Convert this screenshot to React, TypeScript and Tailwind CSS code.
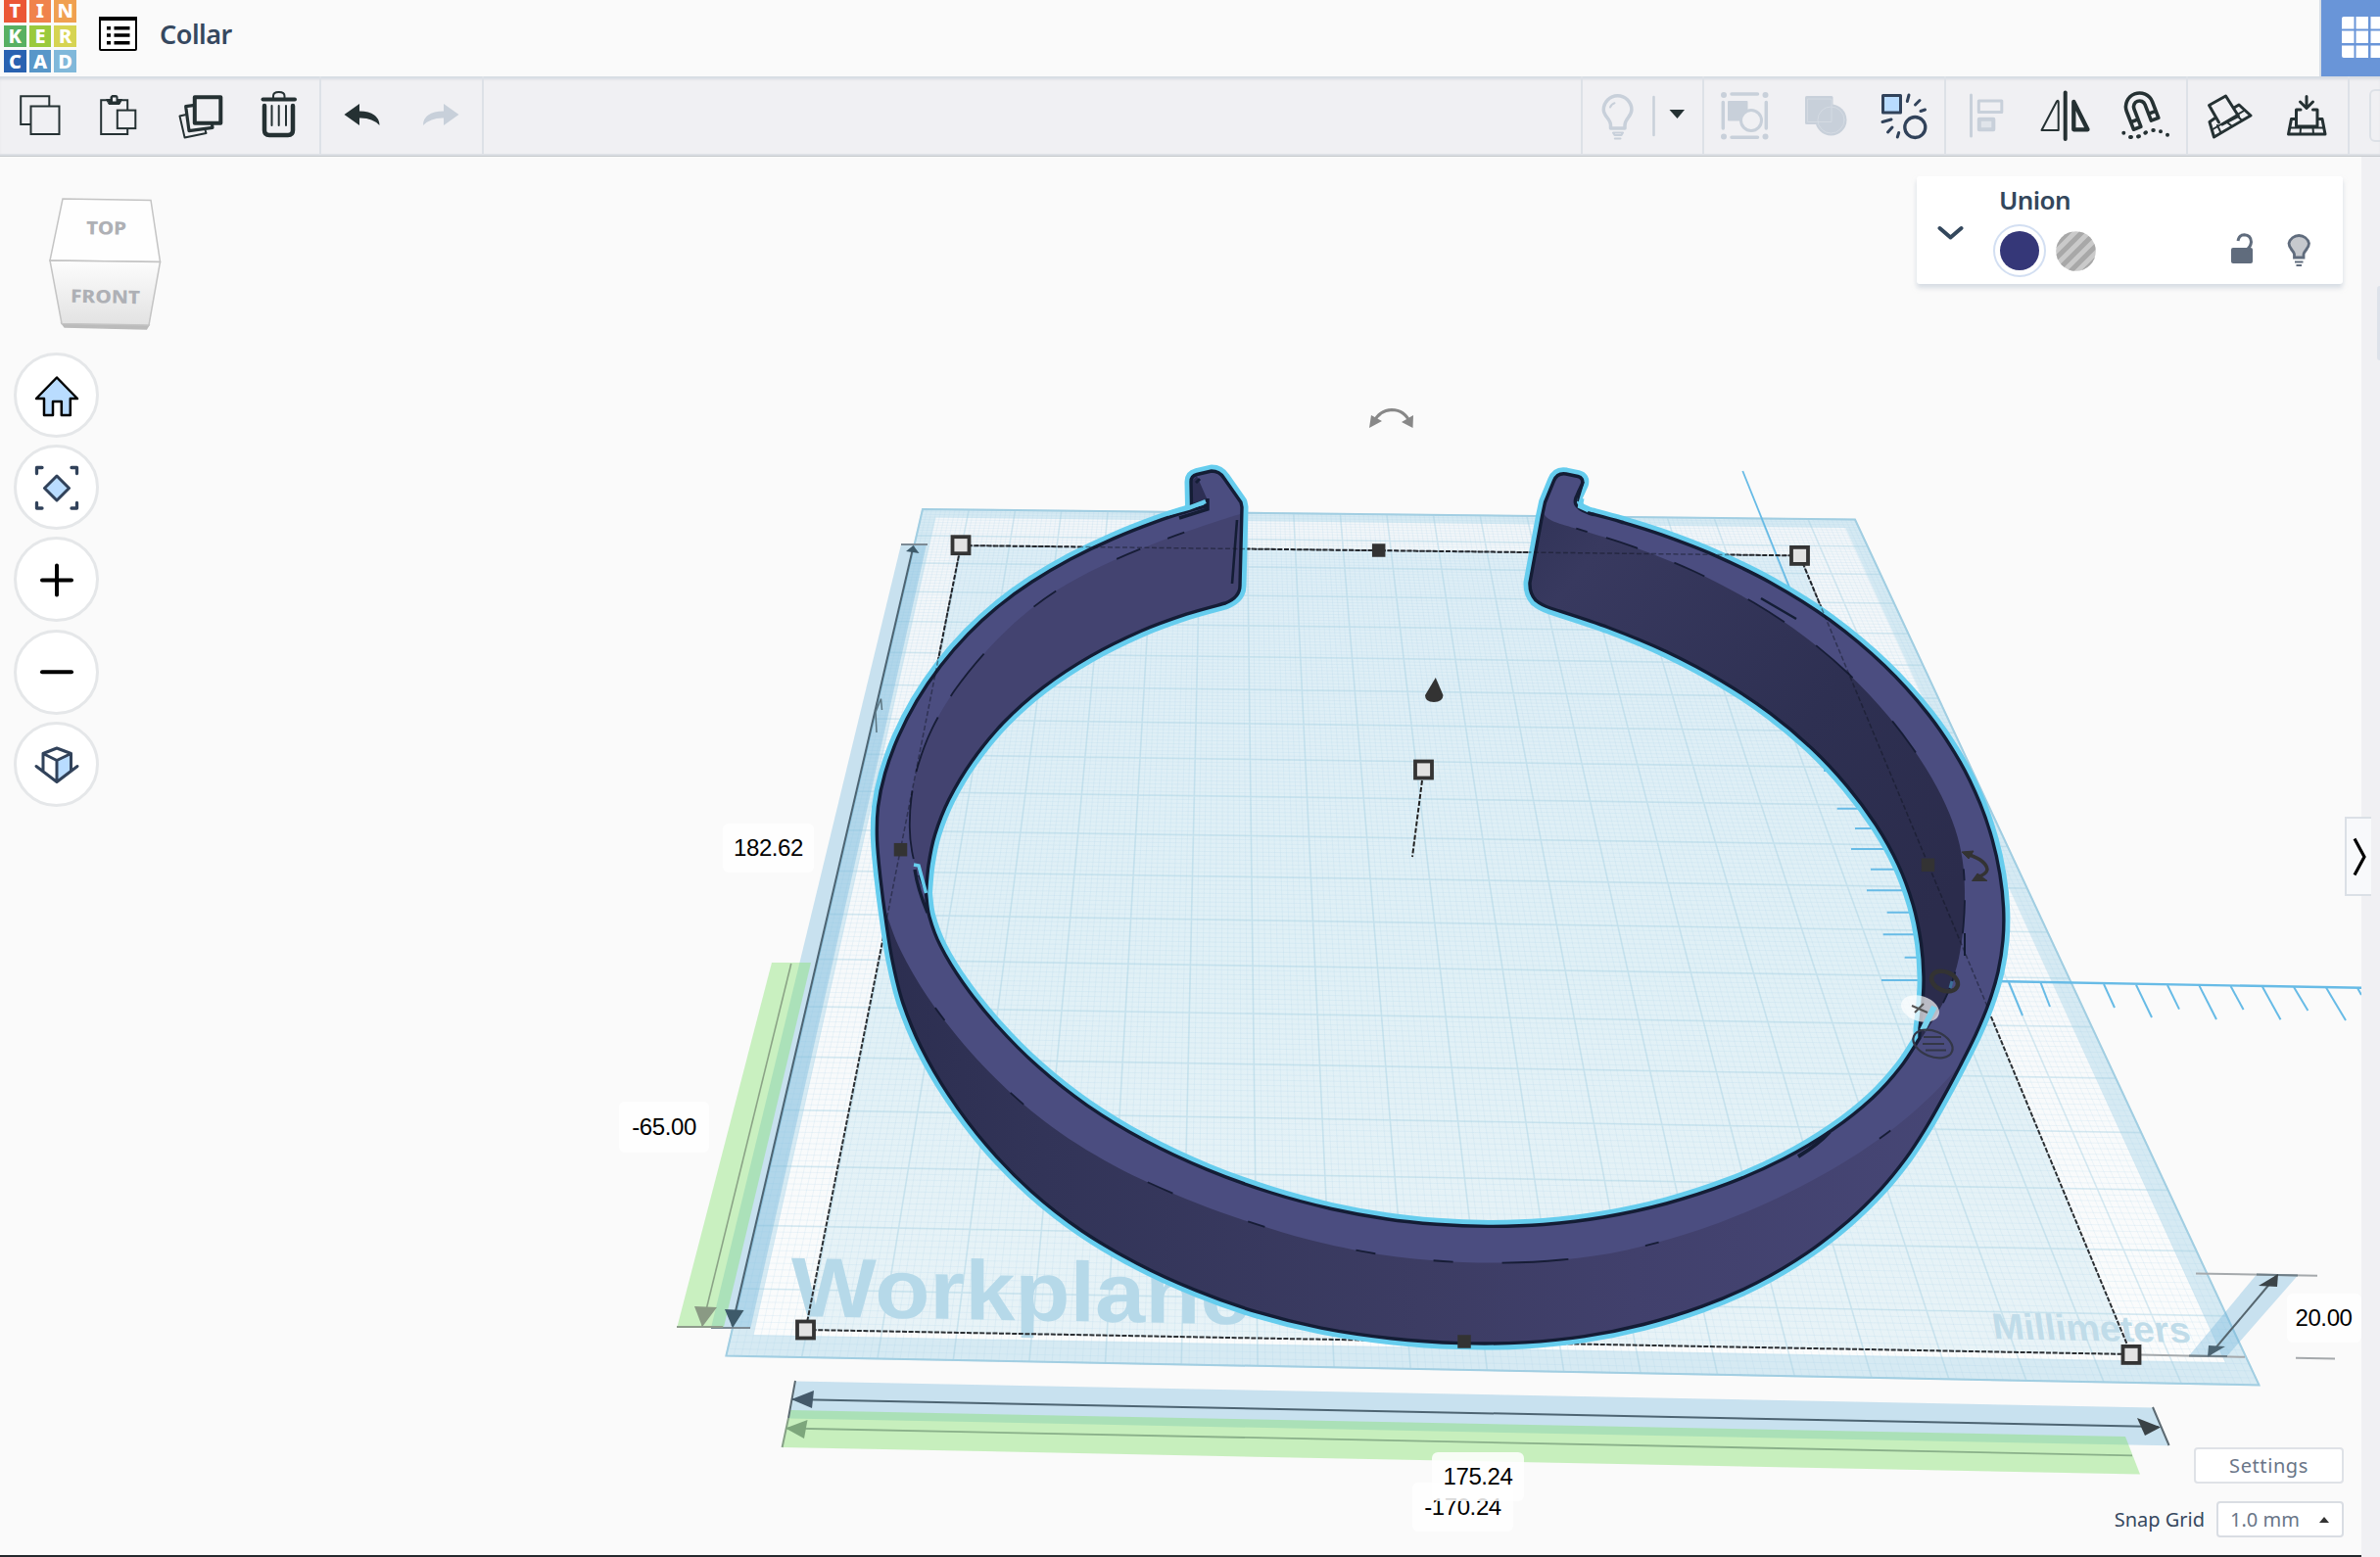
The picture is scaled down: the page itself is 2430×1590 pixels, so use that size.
import React from "react";

type P = [number, number];

/* Smooth path through points (Catmull-Rom converted to cubic Béziers). */
function smooth(pts: P[], move: "M" | "L" = "M"): string {
  let d = `${move}${pts[0][0].toFixed(1)} ${pts[0][1].toFixed(1)}`;
  for (let i = 0; i < pts.length - 1; i++) {
    const a = pts[i - 1] || pts[i];
    const b = pts[i];
    const c = pts[i + 1];
    const e = pts[i + 2] || c;
    d += `C${(b[0] + (c[0] - a[0]) / 6).toFixed(1)} ${(b[1] + (c[1] - a[1]) / 6).toFixed(1)} ${(c[0] - (e[0] - b[0]) / 6).toFixed(1)} ${(c[1] - (e[1] - b[1]) / 6).toFixed(1)} ${c[0].toFixed(1)} ${c[1].toFixed(1)}`;
  }
  return d;
}

/* Evens out small wobbles in a polyline without shrinking it (Taubin filter). */
function fair(pts: P[]): P[] {
  let cur = pts;
  for (const k of [0.5, -0.52, 0.5, -0.52, 0.5, -0.52]) {
    const src = cur;
    cur = src.map((p, i): P => {
      if (i === 0 || i === src.length - 1) return p;
      const mx = (src[i - 1][0] + src[i + 1][0]) / 2;
      const my = (src[i - 1][1] + src[i + 1][1]) / 2;
      return [p[0] + k * (mx - p[0]), p[1] + k * (my - p[1])];
    });
  }
  return cur;
}

/* Projects unit-square coordinates onto the workplane quad. */
function projector(q: P[]) {
  const [[x0, y0], [x1, y1], [x2, y2], [x3, y3]] = q;
  const dx1 = x1 - x2, dx2 = x3 - x2, sx = x0 - x1 + x2 - x3;
  const dy1 = y1 - y2, dy2 = y3 - y2, sy = y0 - y1 + y2 - y3;
  const det = dx1 * dy2 - dx2 * dy1;
  const g = (sx * dy2 - dx2 * sy) / det;
  const h = (dx1 * sy - sx * dy1) / det;
  const a = x1 - x0 + g * x1, b = x3 - x0 + h * x3;
  const c = y1 - y0 + g * y1, e = y3 - y0 + h * y3;
  return (u: number, v: number): P => {
    const w = g * u + h * v + 1;
    return [(a * u + b * v + x0) / w, (c * u + e * v + y0) / w];
  };
}

const plane: P[] = [[942, 520], [1894, 530.6], [2306.5, 1414.4], [741.4, 1384.5]];
const proj = projector(plane);

function gridPath(step: number): string {
  let d = "";
  for (let i = 0; i <= 200; i += step) {
    const t = i / 200;
    const [a, b, c, e] = [proj(t, 0), proj(t, 1), proj(0, t), proj(1, t)];
    d += `M${a[0].toFixed(1)} ${a[1].toFixed(1)}L${b[0].toFixed(1)} ${b[1].toFixed(1)}`;
    d += `M${c[0].toFixed(1)} ${c[1].toFixed(1)}L${e[0].toFixed(1)} ${e[1].toFixed(1)}`;
  }
  return d;
}
const minorGrid = gridPath(1);
const majorGrid = gridPath(10);

const outer: P[] = fair([
  [1231, 517], [1215, 522], [1181.6, 532], [1135.7, 550], [1092, 572], [1054, 594], [1020, 619], [989, 647], [959.7, 681],
  [936.7, 715], [917, 753], [903.6, 790], [896.5, 826], [895.5, 856], [899, 895], [905.5, 942], [911.8, 984], [922, 1024],
  [940, 1068], [969, 1119], [1007.8, 1170], [1053.7, 1217], [1104.7, 1257], [1160.8, 1290], [1222, 1317.500], [1283.3, 1339.500],
  [1347, 1356], [1420, 1366.5], [1493, 1371.5], [1557.7, 1370.5], [1616.8, 1364.5], [1677, 1352.5], [1738, 1334],
  [1794, 1310], [1844, 1280], [1887, 1247], [1921, 1213], [1945, 1184], [1966, 1152], [1984.7, 1119], [2001, 1088],
  [2016.7, 1057.500], [2030.500, 1025], [2040, 992], [2044.800, 960], [2045.5, 928], [2041.7, 892], [2033.6, 857],
  [2021, 821], [2001, 778], [1970, 731], [1924, 679], [1867.7, 632.500], [1808.4, 595.500], [1749, 566.5], [1695.7, 546],
  [1654.2, 533], [1622, 524],
]);
const holeRight: P[] = fair([
  [1583, 621], [1642, 640], [1701.7, 665.5], [1757, 695.5], [1808.4, 729], [1850, 764.5], [1885.5, 803.3], [1915, 842],
  [1938, 882.500], [1953.2, 923], [1961.5, 964], [1963.7, 1000], [1963, 1022], [1960, 1050],
]);
const holeBottom: P[] = fair([
  [1960, 1060], [1942, 1089], [1912.4, 1121], [1869.7, 1154.5], [1822, 1183], [1764, 1208.500], [1702, 1229], [1636.5, 1243],
  [1575, 1250.5], [1520, 1252], [1465.7, 1249.800], [1416, 1244.500], [1359.8, 1234.6], [1298.6, 1217.8], [1232.2, 1194.6],
  [1168, 1164], [1109.8, 1128.500], [1060, 1089.500], [1018, 1047], [983, 1003], [960, 966], [948, 935], [945.5, 912],
]);
const holeLeft: P[] = fair([
  [945.5, 912], [948, 883], [955, 852], [968, 818], [992.9, 776.7], [1024.500, 738], [1064.3, 702.5], [1112, 670.7],
  [1166.3, 643.3], [1213, 627], [1251, 616],
]);
const hookRight =
  "C1606 518 1607 512 1610 506L1615.500 494Q1617 488 1611 486.500L1599 484Q1590 482.500 1586.500 491L1577.500 513L1574.500 527L1562 595Q1561.500 606 1568 613Q1574 618 1583 621";
const hookLeft = "Q1266 610 1266 598L1268 518L1267 513L1249.500 488Q1245 481 1237 481L1222 484.500Q1216 486 1216 492L1216.500 516L1231 512Z";

const silhouette = smooth(outer) + hookRight + smooth(holeRight, "L") + smooth(holeBottom, "L") + smooth(holeLeft, "L") + hookLeft;

const rimLeft: P[] = fair([
  [1266, 525], [1227.5, 537], [1176.5, 556], [1120, 580], [1079.6, 602.500], [1043.9, 630], [1008, 664], [974, 705], [952, 744],
  [938, 780], [930.6, 815], [929, 845], [931.6, 870], [936, 889], [945.5, 912],
]);
const rimRight: P[] = fair([
  [1575, 522], [1580, 528], [1590, 535], [1614, 541.5], [1666, 557], [1731, 583.500], [1792, 616], [1844, 652], [1887, 688],
  [1927, 730], [1960, 774], [1982, 814], [1996.2, 847], [2003.3, 877], [2005.7, 908], [2004.3, 946], [2000, 979],
  [1991, 1009], [1977.500, 1036], [1962, 1060],
]);
const rimFront: P[] = fair([
  [904, 930], [918, 968], [950, 1024], [1007.8, 1093], [1067, 1145], [1135, 1188.500], [1217, 1227], [1313.9, 1259.500],
  [1390, 1277.500], [1459, 1286.500], [1531.4, 1289], [1594, 1286], [1660, 1276.500], [1732, 1257], [1807.3, 1227],
  [1880, 1189], [1935, 1151], [1974, 1116], [2001, 1088],
]);
const wallLeft = smooth(rimLeft) + smooth(holeLeft, "L") + "Q1266 610 1266 598Z";
const wallRight =
  smooth(rimRight) + smooth([...holeRight].reverse(), "L") + "Q1574 618 1568 613Q1561.500 606 1562 595Z";
const wallFront = smooth(rimFront) + smooth(outer.slice(15, 41).reverse(), "L") + "Z";

const rulerDown: [number, number, number, number][] = [
  [2051, 1003, 2065, 1037], [2083.6, 1003.7, 2093, 1028], [2148, 1005, 2159, 1029], [2181, 1005.7, 2197, 1039],
  [2213, 1006, 2225, 1030.6], [2245.5, 1006.6, 2263, 1041], [2277.5, 1007, 2290.6, 1031], [2310, 1007.8, 2328.5, 1041.3],
  [2342, 1008, 2356.4, 1032], [2375, 1008.6, 2395, 1042], [2407, 1009, 2411, 1016],
];
const rulerSide: P[] = [
  [1862, 787], [1875.7, 825.7], [1894, 846], [1890, 867], [1910, 887.7], [1906, 909.3], [1926.7, 931.7], [1922.7, 954.3], [1944.7, 977.7],
  [1921, 1001],
];

function Handle({ x, y }: { x: number; y: number }) {
  return <rect x={x - 8.5} y={y - 8.5} width="17" height="17" fill="#e2e2e2" stroke="#343434" strokeWidth="3.8" />;
}
function Knob({ x, y }: { x: number; y: number }) {
  return <rect x={x - 6.75} y={y - 6.75} width="13.5" height="13.5" fill="#333" />;
}

function Scene() {
  return (
    <svg className="block h-full w-full" viewBox="0 159 2411 1429" preserveAspectRatio="xMinYMin slice" fill="none">
      <defs>
        <linearGradient id="wr" gradientUnits="userSpaceOnUse" x1="1561" y1="560" x2="2000" y2="900">
          <stop offset="0" stopColor="#33355a" />
          <stop offset="0.1" stopColor="#38395f" />
          <stop offset="0.6" stopColor="#2e3052" />
          <stop offset="1" stopColor="#2b2c4c" />
        </linearGradient>
        <linearGradient id="wf" gradientUnits="userSpaceOnUse" x1="900" y1="0" x2="2000" y2="0">
          <stop offset="0" stopColor="#2c2e50" />
          <stop offset="0.15" stopColor="#323458" />
          <stop offset="0.5" stopColor="#3c3c63" />
          <stop offset="0.7" stopColor="#41406c" />
          <stop offset="1" stopColor="#464675" />
        </linearGradient>
        <linearGradient id="pl" gradientUnits="userSpaceOnUse" x1="0" y1="530" x2="0" y2="1390">
          <stop offset="0" stopColor="#f2f6f9" />
          <stop offset="1" stopColor="#fbfcfc" />
        </linearGradient>
        <linearGradient id="bx" gradientUnits="userSpaceOnUse" x1="0" y1="560" x2="0" y2="1380">
          <stop offset="0" stopColor="#deeef6" />
          <stop offset="0.5" stopColor="#e0f0f6" />
          <stop offset="1" stopColor="#e8f3f7" />
        </linearGradient>
      </defs>

      {/* workplane */}
      <path d="M942 520L1894 530.6L2306.5 1414.4L741.4 1384.5Z" fill="#d6eaf3" stroke="#a3cfe3" strokeWidth="2" />
      <path d="M955.6 528.5L1884.3 539L2271.7 1391L769.5 1363Z" fill="url(#pl)" />
      <path d="M981 557L1837.5 567.4L2176 1383L822.5 1358Z" fill="url(#bx)" />
      <path d={minorGrid} stroke="#a9d3e6" strokeWidth="0.8" opacity="0.22" />
      <path d={majorGrid} stroke="#9fcde1" strokeWidth="1.7" opacity="0.32" />
      <g fontFamily='"Liberation Sans", Arial, sans-serif' fontWeight="700">
        <text transform="matrix(1.07 .019 0 1 808 1344)" fontSize="86" fill="#b6d9e9">Workplane</text>
        <text transform="matrix(1.045 .021 .15 1 2036 1367)" fontSize="37" fill="#c0dce9">Millimeters</text>
      </g>

      {/* left dimension bands */}
      <path d="M920 556L946 556L766.4 1356L726 1356Z" fill="#6fb5da" fillOpacity="0.36" />
      <path d="M788 983H828L739 1355H691.4Z" fill="#80e06a" fillOpacity="0.4" />
      <path d="M920 556H947M726 1356H766" stroke="#7c8a94" strokeWidth="2" />
      <path d="M691 1355H738" stroke="#8f9c8c" strokeWidth="2" />
      <path d="M932.5 558L747.5 1354" stroke="#4d6472" strokeWidth="2" />
      <path d="M807.8 984L717 1354" stroke="#8ba386" strokeWidth="1.6" />
      <path d="M932.5 557L938.5 565L925 563ZM740 1337L759.5 1338L748 1356Z" fill="#3e5a6a" />
      <path d="M709 1334L732 1335L717 1355Z" fill="#8a9a84" />
      <path d="M899.5 713.5L900.5 725M899.5 713.5L894 727L895 748" stroke="#5b7480" strokeWidth="1.5" />

      {/* bottom dimension bands */}
      <path d="M811.8 1410.5L2198 1437.4L2214.6 1476.3L804.7 1448.4Z" fill="#6fb5da" fillOpacity="0.36" />
      <path d="M806.7 1440L2170 1467L2185 1505.6L798.6 1478Z" fill="#80e06a" fillOpacity="0.42" />
      <path d="M812 1410L805 1448M2198 1437L2214.6 1476" stroke="#5c6a72" strokeWidth="2" />
      <path d="M805 1448L798.6 1478" stroke="#86a086" strokeWidth="2" />
      <path d="M809 1429L2204 1457" stroke="#4d6472" strokeWidth="2" />
      <path d="M803 1458.5L2177 1486.3" stroke="#8ab08a" strokeWidth="1.8" />
      <path d="M808 1429L831 1420L829 1438Z" fill="#44596a" />
      <path d="M2206 1457.5L2182 1448L2190 1466Z" fill="#3a4246" />
      <path d="M802 1458.5L824.5 1450L821 1469Z" fill="#7da67c" />

      {/* height dimension */}
      <path d="M2304 1301.4L2346 1302.4L2273.7 1385L2235 1384.5Z" fill="#6fb5da" fillOpacity="0.36" />
      <path d="M2242 1300.4L2366 1302.8M2186 1383.4L2292 1385.8M2344 1386.8L2384 1387.5" stroke="#a5a9ac" strokeWidth="2" />
      <path d="M2304 1301.5L2346 1302.5M2235 1384.5L2274 1385" stroke="#6f7f88" strokeWidth="2" />
      <path d="M2325 1302L2255.3 1384.7" stroke="#55656e" strokeWidth="2" />
      <path d="M2326 1301L2306 1313L2325 1314Z" fill="#3c4448" />
      <path d="M2254 1385.5L2255 1374L2272 1375Z" fill="#4c6472" />

      {/* ruler */}
      <g stroke="#67bbe6" strokeWidth="2">
        <path d="M1779.3 481L1832 612" strokeWidth="1.8" />
        <path d="M2035 1002L2411 1008.8" strokeWidth="2.4" />
        {rulerDown.map(([a, b, c, d]) => <path key={a} d={`M${a} ${b}L${c} ${d}`} />)}
        {rulerSide.map(([x, y]) => <path key={y} d={`M${x} ${y}h42`} />)}
      </g>

      {/* selection box on the plane */}
      <path d="M981 557L1837.5 567.4L2176 1383L822.5 1358Z" stroke="#2b2f33" strokeWidth="2" strokeDasharray="5 1.6" />

      {/* collar */}
      <path d={silhouette} stroke="#66cdee" strokeWidth="13" strokeLinejoin="round" />
      <path d={silhouette} fill="#4b4d80" />
      <path d={wallLeft} fill="#434370" />
      <path d={wallRight} fill="url(#wr)" />
      <path d={wallFront} fill="url(#wf)" />
      <path d="M1216.5 515L1216 492L1222 486L1226 495L1233 511Z" fill="#2d2f54" />
      <path d={silhouette} stroke="#141d35" strokeWidth="3.4" strokeLinejoin="round" />
      <path d={smooth(rimLeft)} stroke="#171d36" strokeWidth="1.8" strokeDasharray="0 60 18 30 26 70 28 70 55 25 60 20 70 18 90 40" />
      <path d={smooth(rimRight)} stroke="#171d36" strokeWidth="1.8" strokeDasharray="0 40 12 20 34 40 34 50 44 40 50 60 40 90" />
      <path d={smooth(rimFront)} stroke="#171d36" strokeWidth="1.8" strokeDasharray="0 112 16 100 18 150 28 82 18 96 20 60 20 50 68 80 14 250 14 110 40 60" />
      <path d="M1798 611L1834 632M1263 531L1258 596" stroke="#141d35" strokeWidth="2.6" />
      <path d="M1836 1181Q1856 1169 1868 1156" stroke="#141d35" strokeWidth="4" />
      <path d="M1204 529L1233 520V509" stroke="#141d35" strokeWidth="3.5" />
      <path d="M1192 524.5L1214 518.5L1231 512" stroke="#66cdee" strokeWidth="4.5" />
      <path d="M1615 509L1613.5 517L1622 521" stroke="#66cdee" strokeWidth="5" />
      <path d="M1617 492L1611 512L1611 502Z" fill="#141d35" stroke="#141d35" strokeWidth="1.5" />
      <path d="M1225 489L1221 493" stroke="#141d35" strokeWidth="3" />
      <path d="M933 883L938 884L945.500 912" stroke="#66cdee" strokeWidth="3.5" />
      <path d="M934 888Q937 908 947 932" stroke="#141d35" strokeWidth="3.4" />

      {/* box edges showing through */}
      <path d="M981 557L1837.5 567.4L2030 1030M981 557L905 940" stroke="#10131f" strokeWidth="1.5" strokeDasharray="5 2.5" opacity="0.45" />
      <path d="M1452 797L1442 875" stroke="#222" strokeWidth="2" strokeDasharray="5 2" />

      {/* right-hand gizmos */}
      <path d="M2006 953V976" stroke="#141d35" strokeWidth="2" />
      <g stroke="#333" strokeWidth="3">
        <path d="M2011 873Q2028 879 2029 888Q2028 893 2020 895" strokeWidth="3.500" />
        <path d="M2003 870L2015 869L2010 877ZM2013.5 899.5L2019 892L2029 899.5Z" fill="#333" strokeWidth="1" />
        <ellipse cx="1985.5" cy="1002" rx="14" ry="9.5" transform="rotate(22 1985.5 1002)" strokeWidth="4.5" />
      </g>
      <path d="M1993 1002L1991 1009" stroke="#3c6f98" strokeWidth="3" />
      <ellipse cx="1960.5" cy="1030" rx="20" ry="13" transform="rotate(18 1960.5 1030)" fill="#fff" fillOpacity="0.68" />
      <path d="M1975 1028L1963 1052" stroke="#7ad4ee" strokeWidth="6" />
      <path d="M1952 1027L1968 1034M1964 1025L1955 1034" stroke="#555" strokeWidth="2" />
      <ellipse cx="1973.5" cy="1066" rx="21" ry="13" transform="rotate(22 1973.5 1066)" stroke="#333747" strokeWidth="2.2" />
      <path d="M1964 1059H1982M1963 1066H1985M1966 1072.5H1987" stroke="#333747" strokeWidth="2.2" />

      {/* rotate arrow */}
      <path d="M1403 431Q1408 419 1421 418.5Q1434 418.5 1440 432" stroke="#888" strokeWidth="3.2" />
      <path d="M1398 437L1400 424L1411 430ZM1442.5 437L1431 431L1443 424Z" fill="#888" />

      <path d="M1465.8 692L1473.5 710Q1473 717 1464 717Q1455 717 1455 710Z" fill="#333" />
      <Handle x={981} y={556.7} />
      <Handle x={1837.5} y={567.4} />
      <Handle x={1453.5} y={786} />
      <Handle x={822.5} y={1358} />
      <Handle x={2176} y={1383.4} />
      <Knob x={1407.7} y={562} />
      <Knob x={919.5} y={867.7} />
      <Knob x={1968.5} y={883.3} />
      <Knob x={1495} y={1370} />
    </svg>
  );
}

/* One toolbar slot; drawings use the toolbar's own coordinates. */
function Slot({ x, w, children, color = "#253133" }: { x: number; w: number; children?: React.ReactNode; color?: string }) {
  return (
    <svg className="block shrink-0" width={w} height={80} viewBox={`${x} 78 ${w} 80`} fill="none" stroke={color} strokeWidth="2" strokeLinecap="round" strokeLinejoin="round">
      {children}
    </svg>
  );
}
const Rule = () => <div className="h-full w-[2px] shrink-0 bg-[#dde1e7]" />;

function Toolbar() {
  return (
    <div className="relative z-10 flex h-[81px] w-full shrink-0 border-b-2 border-[#dde0e5] bg-[#f0f0f3] shadow-[inset_0_4px_3px_-1px_#d6dbe2,0_1px_0_#c3c7cb]">
      <Slot x={0} w={82}>
        <g strokeLinecap="butt" strokeLinejoin="miter">
          <path d="M31 127H21.2V98.3H50.3V108" />
          <rect x="31.5" y="108.5" width="29" height="28.5" />
        </g>
      </Slot>
      <Slot x={82} w={82}>
        <g strokeLinecap="butt" strokeLinejoin="miter">
          <path d="M130.2 112V102.3H103.2V137H130.2V132" />
          <rect x="119.8" y="112.6" width="18.5" height="18.5" />
        </g>
        <path d="M109 101.5H113V99Q113.5 97.5 115 97.5H118.5Q120 97.5 120 99V101.5H124.5L122 106.5H111.5Z" fill="#253133" strokeWidth="1" />
        <rect x="115" y="99.5" width="3.5" height="4" fill="#f0f0f3" stroke="none" />
      </Slot>
      <Slot x={164} w={82}>
        <rect x="198.8" y="99.3" width="26.5" height="26.5" strokeWidth="4" />
        <path d="M197 107.7L189.7 108.7L193 133.6L217 130.3L216.5 127.5" strokeWidth="3.2" />
        <path d="M189 117.3L183.5 118.5L188.6 140.6L210.5 136L209.7 133.5" strokeWidth="2" />
      </Slot>
      <Slot x={246} w={80}>
        <path d="M268.5 101.5H301" strokeWidth="4" />
        <path d="M279 100V98Q279 94 284.7 94Q290.5 94 290.5 98V100" />
        <path d="M270 108V133Q270 138 275 138H294Q299 138 299 133V108" strokeWidth="4.5" />
        <path d="M277.5 108V128M284.7 108V128M292 108V128" />
      </Slot>
      <Rule />
      <Slot x={328} w={82}>
        <path d="M351.5 117L367 106V113.5Q387 114 387.5 128Q380 120 367 120.5V128Z" fill="#253133" stroke="none" />
      </Slot>
      <Slot x={410} w={82}>
        <path d="M468.5 117L453 106V113.5Q432 114 432 128Q440 120 453 120.5V128Z" fill="#c8d0da" stroke="none" />
      </Slot>
      <Rule />
      <div className="flex-1" />
      <Rule />
      <Slot x={1616} w={122} color="#c8d0da">
        <path d="M1644.5 131V128C1644.5 121 1637.3 119 1637.3 112A14.3 14.3 0 0 1 1665.9 112C1665.9 119 1659 121 1659 128V131Z" strokeWidth="3.5" />
        <path d="M1644 109.5Q1645.5 106 1648.5 105.2" />
        <path d="M1647 135.5H1657L1655.5 138H1648.5ZM1648.8 141.5H1654.5" />
        <path d="M1688.5 99V138" strokeWidth="2.5" />
        <path d="M1704.5 112H1720L1712.5 121Z" fill="#253133" stroke="none" />
      </Slot>
      <Rule />
      <Slot x={1740} w={82} color="#c8d0da">
        <path d="M1768 96H1794.5M1768 140.2H1794.5M1759.3 104.5V131M1803.3 104.5V131" strokeWidth="3.5" />
        <g fill="#c8d0da" stroke="none">
          <circle cx="1760" cy="97" r="3" /><circle cx="1802.5" cy="97" r="3" />
          <circle cx="1760" cy="139.5" r="3" /><circle cx="1802.5" cy="139.5" r="3" />
          <rect x="1764" y="103" width="20.5" height="20.5" rx="1" />
        </g>
        <circle cx="1788" cy="123" r="10.5" fill="#f0f0f3" strokeWidth="3" />
      </Slot>
      <Slot x={1822} w={82} color="#d5dbe3">
        <rect x="1843" y="98" width="28.5" height="29" rx="1.5" fill="#c8d0da" stroke="none" />
        <circle cx="1869.5" cy="122.5" r="16" fill="#c8d0da" stroke="none" />
        <rect x="1846" y="101" width="24" height="23.5" strokeWidth="0.9" />
        <circle cx="1869.5" cy="122.5" r="13.5" strokeWidth="0.9" />
      </Slot>
      <Slot x={1904} w={81} color="#31425a">
        <rect x="1922.5" y="97.5" width="18" height="17.5" fill="#b9dcff" strokeWidth="3" />
        <circle cx="1955.3" cy="130" r="10.5" strokeWidth="3.3" />
        <path d="M1949 97L1947.3 103.5M1960 102.5L1955.5 107M1965.5 112L1961 113.5M1922 124.5L1931 122M1932 130L1927.5 135M1938.7 135.5L1937.3 140" strokeWidth="3" />
      </Slot>
      <Rule />
      <Slot x={1987} w={82} color="#c8d0da">
        <path d="M2012.5 97V139" strokeWidth="3" />
        <rect x="2020.3" y="103" width="23.5" height="11.5" strokeWidth="3" />
        <rect x="2020.8" y="121.8" width="14.5" height="10.5" fill="#e0e4ea" strokeWidth="4" />
      </Slot>
      <Slot x={2069} w={82}>
        <path d="M2108.7 94.5V142" strokeWidth="4" />
        <path d="M2084.5 133L2100 103.5Q2101.7 102 2101.7 104V133Z" />
        <path d="M2117.3 104V132.3H2131.5Z" strokeWidth="4.3" />
      </Slot>
      <Slot x={2151} w={81}>
        <g transform="translate(2184.5 109) rotate(-21)" strokeWidth="3.6" strokeLinejoin="round">
          <path d="M-14 19.500V0A14 14 0 0 1 14 0V17.500H6V0A6 6 0 0 0 -6 0V19.500ZM-14 11.500H-6M6 10H14" />
        </g>
        <path d="M2168.3 135.7h.01M2175 140l1-.1M2183 139.5l1-.3M2190.3 135.700l.7-.4M2198.3 133h.5M2206 134.2h.01M2213 137.7h.01" strokeWidth="4" />
      </Slot>
      <Rule />
      <Slot x={2234} w={82}>
        <g strokeWidth="3">
          <path d="M2265.500 125L2255.5 107.5L2272.5 98L2285.5 118.500L2269 127" />
          <path d="M2261 121L2256 124.5L2260.5 140L2298 118L2286 107L2281 110" />
          <path d="M2258.5 132.5L2292 112.5M2264 128L2267.5 135.5M2274 125L2279 129M2285 119L2289 123" strokeWidth="2" />
        </g>
      </Slot>
      <Slot x={2316} w={81}>
        <g strokeWidth="3">
          <path d="M2355 98.5V110M2348.5 104L2355 110.5L2361.5 104" />
          <path d="M2349 112H2344.5V129H2366V112H2361.5" />
          <path d="M2343 121.5H2339.5L2336.5 137H2374L2371 121.5H2367.5" />
          <path d="M2338 130.5H2373M2349 130.5L2348.5 137M2361.5 130.5L2362 137" strokeWidth="2" />
        </g>
      </Slot>
      <Rule />
      <div className="h-full w-[31px] shrink-0 overflow-hidden pt-[13px] pl-5">
        <div className="h-[54px] w-10 rounded-md border-2 border-[#dde1e7]" />
      </div>
    </div>
  );
}

const tiles: [string, string][] = [
  ["T", "bg-[#eb5736]"], ["I", "bg-[#f0834c]"], ["N", "bg-[#f0a050]"],
  ["K", "bg-[#58b062]"], ["E", "bg-[#9aca3c]"], ["R", "bg-[#d6d452]"],
  ["C", "bg-[#2962b1]"], ["A", "bg-[#5897c9]"], ["D", "bg-[#80b8da]"],
];

function Header() {
  return (
    <header className="flex h-[78px] w-full shrink-0 bg-[#fafafa] font-['Noto_Sans',sans-serif]">
      <div className="ml-1 grid h-[74px] w-[74px] shrink-0 grid-cols-3 grid-rows-3 gap-[3px]">
        {tiles.map(([c, bg]) => (
          <div key={c} className={`${bg} flex items-center justify-center text-[20px] leading-[22px] font-extrabold text-white`}>{c}</div>
        ))}
      </div>
      <svg className="mt-[17px] ml-[23px] shrink-0" width="39" height="35" viewBox="0 0 39 35">
        <rect x="1" y="1" width="37" height="33" rx="1" fill="#fff" stroke="#000" strokeWidth="2" />
        <path d="M0 0H39V4H0Z" />
        <path d="M8 10h4v3.5h-4zM8 17.3h4v3.5h-4zM8 25h4v3.5h-4zM15.5 10h16v3.5h-16zM15.5 17.3h16v3.5h-16zM15.5 25h16v3.5h-16z" />
      </svg>
      <div className="mt-[15px] ml-[23px] text-[27px] leading-10 font-semibold tracking-[-0.5px] whitespace-nowrap text-[#36485f]">Collar</div>
      <div className="flex-1" />
      <div className="w-[62px] shrink-0 overflow-hidden border-l-2 border-[#d8dee6] bg-[#6995d8] pt-[17px] pl-[21px]">
        <svg width="42" height="42" viewBox="0 0 42 42" fill="#fff">
          <path d="M2 0H12.5V12.5H0V2Q0 0 2 0ZM14.5 0H27V12.5H14.5ZM29.5 0H42V12.5H29.5ZM0 14.5H12.5V27H0ZM14.5 14.5H27V27H14.5ZM29.5 14.5H42V27H29.5ZM0 29.5H12.5V42H2Q0 42 0 40ZM14.5 29.5H27V42H14.5ZM29.5 29.5H42V42H29.5Z" />
        </svg>
      </div>
    </header>
  );
}

function RoundButton({ children }: { children: React.ReactNode }) {
  return (
    <button className="flex size-[87px] items-center justify-center rounded-full border-[3px] border-[#e5e7e9] bg-white">
      <svg width="60" height="60" viewBox="-30 -30 60 60" fill="none" strokeLinecap="round" strokeLinejoin="round">{children}</svg>
    </button>
  );
}

function ViewControls() {
  return (
    <div className="absolute top-[201px] left-[14px] flex flex-col gap-[7.2px]">
      <RoundButton>
        <path d="M0 -18.5L21 3H13.8V20H4.8V6H-4V20H-13V3H-21Z" fill="#b9dcff" stroke="#000" strokeWidth="2.5" />
      </RoundButton>
      <RoundButton>
        <path d="M0 -12L12.5 .5L0 13L-12.5 .5Z" fill="#b9dcff" stroke="#31425a" strokeWidth="3" />
        <path d="M-20.5 -14.5V-20.5H-15M15 -20.5H20.5V-14.5M20.5 15.5V21H15M-15 21H-20.5V15.5" stroke="#31425a" strokeWidth="3.3" />
      </RoundButton>
      <RoundButton><path d="M-15 .5H15M0 -14.5V15.5" stroke="#000" strokeWidth="4" /></RoundButton>
      <RoundButton><path d="M-15 .3H15" stroke="#000" strokeWidth="4" /></RoundButton>
      <RoundButton>
        <path d="M0 -4L15 -10.5V7L0 18.5Z" fill="#b9dcff" />
        <path d="M-21 2.5L0 18.5L21 2.5M-14 7V-10.5L0 -16L14.5 -10.5V7M-14 -10.5L0 -3.5L14.5 -10.5M0 -3.5V18" stroke="#31425a" strokeWidth="3" />
      </RoundButton>
    </div>
  );
}

function ViewCube() {
  return (
    <svg className="absolute top-[31px] left-[40px]" width="140" height="160" viewBox="40 190 140 160">
      <defs>
        <linearGradient id="cf" x1="0" y1="0" x2="0" y2="1">
          <stop offset="0" stopColor="#fdfdfd" />
          <stop offset="1" stopColor="#e2e2e2" />
        </linearGradient>
      </defs>
      <path d="M63 330L152 332L149.5 336L66 334Z" fill="#bbb" stroke="#bbb" strokeWidth="1.5" />
      <path d="M64 203L154 204.5L163.5 267.5L51 266Z" fill="#fefefe" stroke="#c4c4c4" strokeWidth="1.5" />
      <path d="M51 266L163.5 267.5L152 332L63 330.5Z" fill="url(#cf)" stroke="#c4c4c4" strokeWidth="1.5" />
      <g fontFamily='"Noto Sans", sans-serif' fontWeight="800" fill="#aeb0b5" textAnchor="middle">
        <text x="108.5" y="239.500" fontSize="18.5" textLength="41" lengthAdjust="spacingAndGlyphs" transform="rotate(1 109 239)">TOP</text>
        <text x="107.5" y="309.500" fontSize="18.5" textLength="71" lengthAdjust="spacingAndGlyphs" transform="rotate(1 108 309)">FRONT</text>
      </g>
    </svg>
  );
}

function Inspector() {
  return (
    <div className="absolute top-[21px] left-[1957px] flex h-[110px] w-[435px] rounded-[3px] bg-white shadow-[0_4px_5px_rgba(190,200,212,0.6)] font-['Noto_Sans',sans-serif]">
      <svg className="mt-[50px] ml-[21px] shrink-0" width="28" height="17" viewBox="0 0 28 17" fill="none">
        <path d="M2.5 3L13.5 12.5L24.5 3" stroke="#33475c" strokeWidth="4" strokeLinecap="round" strokeLinejoin="round" />
      </svg>
      <div className="ml-[29px] flex flex-1 flex-col">
        <div className="mt-[8px] ml-[6px] text-[26px] leading-8 font-semibold tracking-[-0.6px] text-[#33475c]">Union</div>
        <div className="mt-[9px] flex h-[54px] items-center">
          <div className="flex size-[54px] shrink-0 items-center justify-center rounded-full border-[2.5px] border-[#d3dff2]">
            <div className="size-10 rounded-full bg-[#353778]" />
          </div>
          <svg className="ml-[10px] shrink-0" width="41" height="41" viewBox="0 0 41 41">
            <clipPath id="hole"><circle cx="20.5" cy="20.5" r="20.3" /></clipPath>
            <g clipPath="url(#hole)">
              <rect width="41" height="41" fill="#cacaca" />
              <path d="M-6 20L20 -6M-6 34L34 -6M-4 46L46 -4M8 48L48 8M21 49L49 21" stroke="#a8a8a8" strokeWidth="5" />
            </g>
          </svg>
          <div className="flex-1" />
          <svg className="mr-[34px] mb-[4px]" width="23" height="32" viewBox="0 0 23 32" fill="none">
            <rect x="0" y="15" width="22" height="16" rx="2" fill="#606c7d" />
            <path d="M7 8Q8 2 13.5 1.8Q20 2 20.500 9Q20 14 16 17" stroke="#606c7d" strokeWidth="3" />
          </svg>
          <svg className="mr-[32px] mb-[2px]" width="25" height="36" viewBox="0 0 25 36" fill="none">
            <path d="M7.5 26V22.5C7 19 2 17 2 11.5A10.5 10.2 0 0 1 22.5 11.5C22.5 17 17.5 19 17 22.5V26Z" fill="#c6c9ce" stroke="#606c7d" strokeWidth="2.8" />
            <path d="M8 30.5H16.5M9.5 34H15" stroke="#606c7d" strokeWidth="2" />
          </svg>
        </div>
      </div>
    </div>
  );
}

const labelClass = "absolute flex items-center justify-center rounded-md bg-white/85 text-[24px] leading-none tracking-[-0.4px] text-black";

export default function App() {
  return (
    <div className="flex h-[1590px] w-[2430px] flex-col overflow-hidden bg-[#fafafa]">
      <Header />
      <Toolbar />
      <main className="flex min-h-0 flex-1">
        <section className="relative w-[2411px] shrink-0 border-b-2 border-[#24282c] bg-[#fafafa] font-['Liberation_Sans',Arial,sans-serif]">
          <Scene />
          <ViewCube />
          <ViewControls />
          <Inspector />
          <div className={`${labelClass} top-[682px] left-[738px] h-[50px] w-[93px]`}>182.62</div>
          <div className={`${labelClass} top-[966px] left-[632px] h-[52px] w-[92px]`}>-65.00</div>
          <div className={`${labelClass} top-[1355px] left-[1442px] h-[50px] w-[103px]`}>-170.24</div>
          <div className={`${labelClass} top-[1324px] left-[1462px] h-[50px] w-[94px]`}>175.24</div>
          <div className={`${labelClass} top-[1162px] left-[2335px] h-[50px] w-[76px] pr-px`}>20.00</div>
          <div className="absolute right-[18px] bottom-[18px] flex flex-col items-end gap-[18px] font-['Noto_Sans',sans-serif] text-[20px]">
            <button className="flex h-[37px] w-[153px] items-center justify-center rounded-[4px] border-2 border-[#dfe2e7] bg-white tracking-[0.6px] text-[#6a7688]">Settings</button>
            <div className="flex items-center gap-[12px]">
              <span className="text-[#36485f]">Snap Grid</span>
              <div className="flex h-[37px] w-[130px] items-center justify-between rounded-[4px] border-2 border-[#d9dde3] bg-white pr-[13px] pl-[12px] text-[#6a7688]">
                <span>1.0 mm</span>
                <span className="h-0 w-0 border-x-[5px] border-b-[6px] border-x-transparent border-b-[#333]" />
              </div>
            </div>
          </div>
          <div className="absolute top-[675px] left-[2394px] z-10 flex h-[81px] w-[27px] items-center justify-center border-2 border-r-0 border-[#dbe0e6] bg-[#f8f9fb]">
            <svg width="16" height="42" viewBox="0 0 16 42" fill="none">
              <path d="M3 2.5L13 21L3 39.5" stroke="#000" strokeWidth="3.2" />
            </svg>
          </div>
        </section>
        <aside className="flex flex-1 flex-col items-end bg-[#f0f0f3] pt-[133px]">
          <div className="h-[76px] w-[3px] rounded-l-sm bg-[#dde2ea]" />
        </aside>
      </main>
    </div>
  );
}
